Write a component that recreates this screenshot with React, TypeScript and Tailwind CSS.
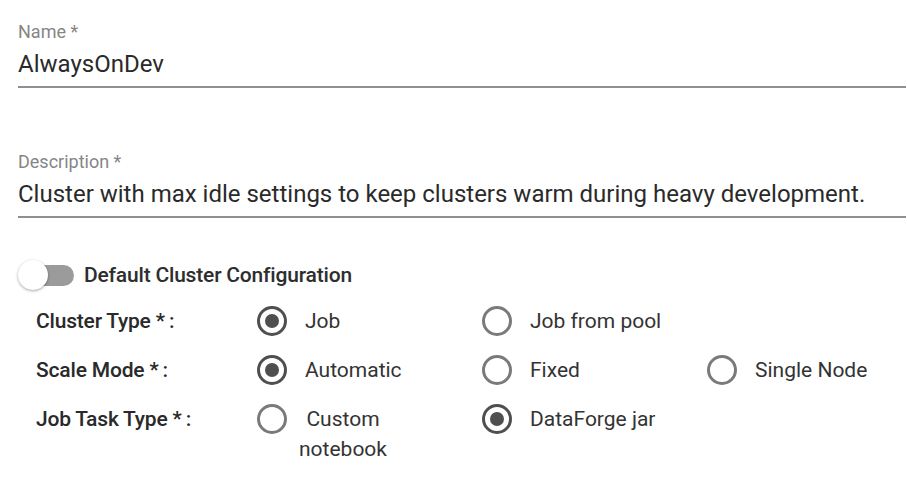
import React from 'react';

type Option = { label: string; checked?: boolean; wrap?: boolean };

const rows: { label: string; options: Option[] }[] = [
  {
    label: 'Cluster Type *\u2009:',
    options: [{ label: 'Job', checked: true }, { label: 'Job from pool' }],
  },
  {
    label: 'Scale Mode *\u2009:',
    options: [{ label: 'Automatic', checked: true }, { label: 'Fixed' }, { label: 'Single Node' }],
  },
  {
    label: 'Job Task Type *\u2009:',
    options: [{ label: 'Custom notebook', wrap: true }, { label: 'DataForge jar', checked: true }],
  },
];

function TextField({ label, value, className }: { label: string; value: string; className?: string }) {
  return (
    <div className={className}>
      <div className="text-[18px] leading-[18px] text-[#868686]">{label}</div>
      <div className="mt-[7px] border-b-2 border-[#8f8f8f] pb-[6px] text-[24px] leading-[32px] text-[#2a2a2a]">
        {value}
      </div>
    </div>
  );
}

function Radio({ option }: { option: Option }) {
  return (
    <div className="flex w-[225px] shrink-0 items-start">
      <span
        className={`flex h-[30px] w-[30px] shrink-0 items-center justify-center rounded-full border-[3px] ${
          option.checked ? 'border-[#4f4f4f]' : 'border-[#7a7a7a]'
        }`}
      >
        {option.checked && <span className="h-[14px] w-[14px] rounded-full bg-[#4f4f4f]" />}
      </span>
      {option.wrap ? (
        <span className="ml-[11px] w-[90px] text-center text-[21px] leading-[30px] text-[#333]">
          {option.label}
        </span>
      ) : (
        <span className="ml-[18px] whitespace-nowrap text-[21px] leading-[30px] text-[#333]">{option.label}</span>
      )}
    </div>
  );
}

export default function App() {
  return (
    <div className="h-[482px] w-[907px] overflow-hidden bg-white font-['Roboto',sans-serif]">
      <div className="pl-[18px] pr-[1px] pt-[23px]">
        <TextField label="Name *" value="AlwaysOnDev" />
        <TextField
          className="mt-[65px]"
          label="Description *"
          value="Cluster with max idle settings to keep clusters warm during heavy development."
        />

        <div className="mt-[42px] flex h-[30px] items-center">
          <div className="relative h-[30px] w-[56px]">
            <span className="absolute left-[5px] top-[5px] h-[21px] w-[51px] rounded-full bg-[#9b9b9b]" />
            <span className="absolute left-0 top-0 h-[30px] w-[30px] rounded-full bg-white shadow-[0_1px_3px_rgba(0,0,0,0.35)]" />
          </div>
          <span className="ml-[10px] font-['Roboto_Medium','Roboto',sans-serif] text-[21px] leading-[30px] tracking-[-0.2px] text-[#2e2e2e]">
            Default Cluster Configuration
          </span>
        </div>

        <div className="mt-[16px] flex flex-col gap-[19px] pl-[18px]">
          {rows.map((row) => (
            <div key={row.label} className="flex items-start">
              <div className="w-[221px] shrink-0 font-['Roboto_Medium','Roboto',sans-serif] text-[21px] leading-[30px] tracking-[-0.2px] text-[#2a2a2a]">
                {row.label}
              </div>
              {row.options.map((o) => (
                <Radio key={o.label} option={o} />
              ))}
            </div>
          ))}
        </div>
      </div>
    </div>
  );
}
